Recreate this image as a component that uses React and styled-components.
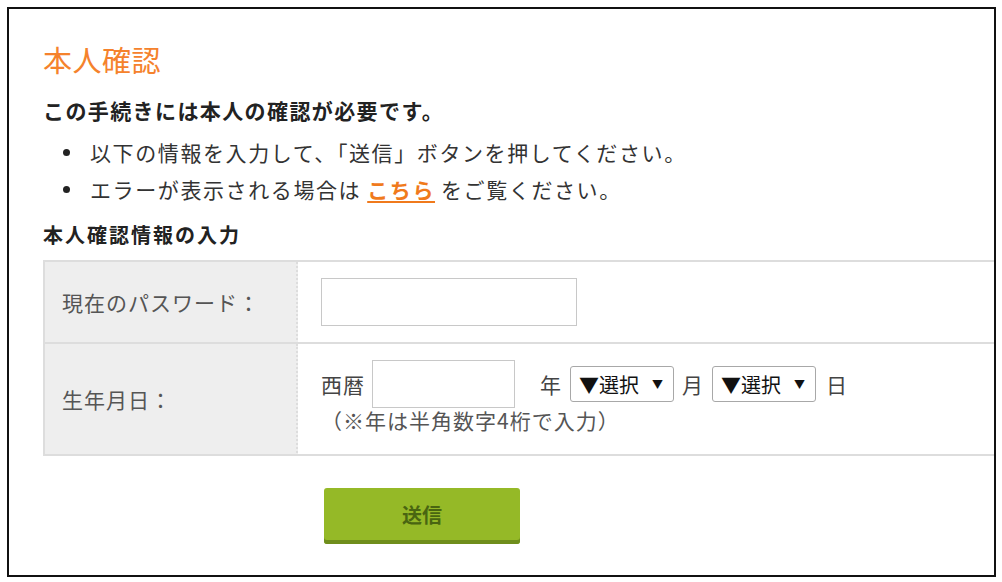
import React from "react";
import styled, { createGlobalStyle } from "styled-components";

const GlobalStyle = createGlobalStyle`
  html, body {
    margin: 0;
    padding: 0;
    background: #ffffff;
  }
  body {
    font-family: "Noto Sans CJK JP", "Noto Sans", sans-serif;
    color: #333333;
  }
`;

const Frame = styled.div`
  margin: 7px 0 0 7px;
  width: 989px;
  height: 570px;
  box-sizing: border-box;
  border: 2px solid #111111;
  overflow: hidden;
  padding: 30px 0 0 34px;
`;

const Title = styled.h1`
  margin: 0;
  font-size: 29px;
  line-height: 40px;
  font-weight: 400;
  color: #f5822c;
  letter-spacing: 0.5px;
`;

const Lead = styled.p`
  margin: 17px 0 0 0;
  font-size: 21px;
  letter-spacing: 1.4px;
  line-height: 28px;
  font-weight: 700;
  color: #222222;
`;

const Bullets = styled.ul`
  margin: 10px 0 0 0;
  padding: 0;
  list-style: none;
`;

const Bullet = styled.li`
  position: relative;
  padding-left: 47px;
  font-size: 21px;
  letter-spacing: 1.6px;
  line-height: 37px;
  color: #333333;

  &::before {
    content: "";
    position: absolute;
    left: 20px;
    top: 15px;
    width: 7px;
    height: 7px;
    border-radius: 50%;
    background: #222222;
  }
`;

const Link = styled.a`
  color: #f07a1c;
  font-weight: 700;
  text-decoration: underline;
  text-underline-offset: 3px;
  margin: 0 6px;
`;

const SubHeading = styled.h2`
  margin: 13px 0 0 0;
  font-size: 20px;
  letter-spacing: 2px;
  line-height: 28px;
  font-weight: 700;
  color: #222222;
`;

const Table = styled.div`
  margin-top: 11px;
  display: grid;
  grid-template-columns: 253px 1fr;
  border-top: 2px solid #dddddd;
  border-left: 2px solid #dddddd;
`;

const Label = styled.div`
  display: flex;
  align-items: center;
  padding-left: 17px;
  background: #eeeeee;
  border-right: 2px dotted #dddddd;
  border-bottom: 2px solid #dddddd;
  font-size: 21px;
  letter-spacing: 1px;
  color: #555555;
  min-height: ${(p) => p.$height}px;
`;

const Cell = styled.div`
  display: flex;
  flex-direction: column;
  justify-content: center;
  padding: ${(p) => p.$pad};
  border-bottom: 2px solid #dddddd;
  box-sizing: border-box;
  min-height: ${(p) => p.$height}px;
`;

const TextInput = styled.input`
  width: ${(p) => p.$width}px;
  height: 48px;
  box-sizing: border-box;
  border: 1px solid #c8c8c8;
  background: #ffffff;
  margin: 0;
  padding: 0 8px;
  font-size: 18px;
  font-family: inherit;
`;

const DateRow = styled.div`
  display: flex;
  align-items: center;
  font-size: 21px;
  color: #444444;
`;

const Unit = styled.span`
  margin: 0 ${(p) => p.$right || 0}px 0 ${(p) => p.$left || 0}px;
  line-height: 24px;
  letter-spacing: 1px;
`;

const SelectWrap = styled.div`
  position: relative;
  width: 104px;
  height: 36px;
`;

const Select = styled.select`
  appearance: none;
  width: 100%;
  height: 100%;
  box-sizing: border-box;
  border: 1px solid #a8a8a8;
  border-radius: 3px;
  background: #ffffff;
  padding: 0 0 0 8px;
  margin: 0;
  font-family: inherit;
  font-size: 20px;
  color: #111111;
`;

const Arrow = styled.span`
  position: absolute;
  right: 11px;
  top: 50%;
  transform: translateY(-50%);
  font-size: 11px;
  color: #111111;
  pointer-events: none;
`;

const Note = styled.div`
  font-size: 21px;
  letter-spacing: 1px;
  line-height: 24px;
  color: #555555;
  margin-top: 0;
`;

const ButtonRow = styled.div`
  margin-top: 32px;
  padding-left: 281px;
`;

const SubmitButton = styled.button`
  width: 196px;
  height: 56px;
  border: none;
  border-radius: 3px;
  background: #95b927;
  box-shadow: inset 0 -4px 0 #6f8e1c;
  color: #496511;
  font-family: inherit;
  font-size: 20px;
  font-weight: 700;
  padding: 0 0 4px 0;
  cursor: pointer;
`;

function DateSelect() {
  return (
    <SelectWrap>
      <Select defaultValue="">
        <option value="">▼選択</option>
      </Select>
      <Arrow>▼</Arrow>
    </SelectWrap>
  );
}

export default function App() {
  return (
    <>
      <GlobalStyle />
      <Frame>
        <Title>本人確認</Title>
        <Lead>この手続きには本人の確認が必要です。</Lead>
        <Bullets>
          <Bullet>以下の情報を入力して、「送信」ボタンを押してください。</Bullet>
          <Bullet>
            エラーが表示される場合は<Link href="#">こちら</Link>をご覧ください。
          </Bullet>
        </Bullets>
        <SubHeading>本人確認情報の入力</SubHeading>
        <Table>
          <Label $height={80}>現在のパスワード：</Label>
          <Cell $height={82} $pad="0 0 0 23px">
            <TextInput type="password" $width={256} />
          </Cell>
          <Label $height={110}>生年月日：</Label>
          <Cell $height={112} $pad="16px 0 22px 23px">
            <DateRow>
              <Unit $right={7}>西暦</Unit>
              <TextInput type="text" $width={143} />
              <Unit $left={25} $right={8}>年</Unit>
              <DateSelect />
              <Unit $left={8} $right={8}>月</Unit>
              <DateSelect />
              <Unit $left={10}>日</Unit>
            </DateRow>
            <Note>（※年は半角数字4桁で入力）</Note>
          </Cell>
        </Table>
        <ButtonRow>
          <SubmitButton type="button">送信</SubmitButton>
        </ButtonRow>
      </Frame>
    </>
  );
}
